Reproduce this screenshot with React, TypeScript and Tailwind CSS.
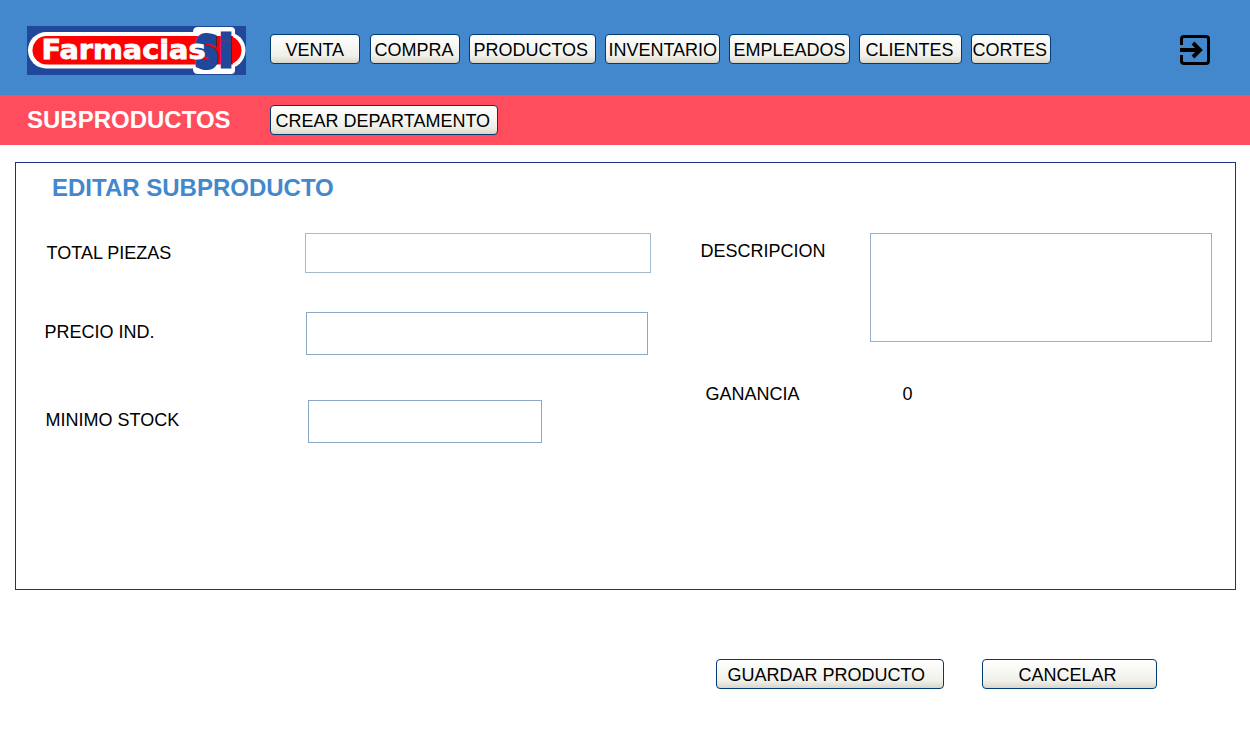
import type { ReactNode } from "react";

function Button({ className = "", children }: { className?: string; children: ReactNode }) {
  return (
    <button
      type="button"
      className={`h-[30px] shrink-0 whitespace-nowrap rounded-[4px] border border-[#003c74] bg-linear-to-b from-white from-0% via-[#f0f0ea] via-75% to-[#d9d5c9] to-100% text-left text-[18px] leading-[28px] text-black ${className}`}
    >
      <span className="block pt-px pl-[0.4px] leading-[28px]">{children}</span>
    </button>
  );
}

function Logo() {
  return (
    <svg className="block h-[49px] w-[219px] shrink-0 overflow-visible" viewBox="0 0 219 49">
      <rect width="219" height="49" fill="#21479b" />
      <rect x="1" y="6" width="217.5" height="36.5" rx="18.25" fill="#fff" />
      <rect x="5.5" y="10" width="209" height="28.5" rx="14.25" fill="#f00" />
      <path d="M171 1h33q4 0 4 4v3l-3 4v25l3 4v3q0 4-4 4h-33q-5 0-5-5v-4h3V10h-3V6q0-5 5-5z" fill="#fff" />
      <path d="M168 10h38v28.5h-38z" fill="#f00" />
      <text x="168" y="40.5" textLength="23.5" lengthAdjust="spacingAndGlyphs" fill="#21479b" stroke="#21479b" strokeWidth="5" fontFamily="DejaVu Sans, sans-serif" fontWeight="700" fontSize="43">
        S
      </text>
      <text x="191.5" y="41" textLength="15" lengthAdjust="spacingAndGlyphs" fill="#21479b" stroke="#21479b" strokeWidth="3" fontFamily="DejaVu Sans, sans-serif" fontWeight="700" fontSize="45">
        i
      </text>
      <text x="14.5" y="33" textLength="164" lengthAdjust="spacingAndGlyphs" fill="#fff" stroke="#fff" strokeWidth="0.8" fontFamily="DejaVu Sans, sans-serif" fontWeight="700" fontSize="26">
        Farmacias
      </text>
    </svg>
  );
}

function ExitIcon() {
  return (
    <svg className="block h-[30px] w-[30px]" viewBox="0 0 30 30" fill="none" stroke="#000" strokeWidth="3">
      <path d="M1.5 10V4Q1.5 1.5 4 1.5H26Q28.5 1.5 28.5 4V26Q28.5 28.5 26 28.5H4Q1.5 28.5 1.5 26V20" />
      <path d="M0 15H20M13 8l7 7-7 7" strokeWidth="4" />
    </svg>
  );
}

export default function App() {
  return (
    <div className="flex h-[750px] w-[1250px] flex-col overflow-hidden bg-white font-['Liberation_Sans',Arial,sans-serif] text-[18px] text-black">
      <header className="flex h-[95px] shrink-0 items-start bg-[#4388cc] pl-[27px]">
        <div className="pt-[26px]"><Logo /></div>
        <nav className="flex pt-[34px] pl-[24px]">
          <Button className="w-[90px] pl-[14px]">VENTA</Button>
          <Button className="ml-[10px] w-[90px] pl-[3px]">COMPRA</Button>
          <Button className="ml-[9px] w-[127px] pl-[3px]">PRODUCTOS</Button>
          <Button className="ml-[9px] w-[115px] pl-[2px]">INVENTARIO</Button>
          <Button className="ml-[9px] w-[121px] pl-[3px]">EMPLEADOS</Button>
          <Button className="ml-[9px] w-[103px] pl-[5px]">CLIENTES</Button>
          <Button className="ml-[9px] w-[80px] pl-0">CORTES</Button>
        </nav>
        <button type="button" aria-label="Salir" className="mt-[35px] ml-auto mr-[40px]"><ExitIcon /></button>
      </header>
      <div className="flex h-[50px] shrink-0 items-start bg-[#ff4d5d] pl-[27px]">
        <h1 className="w-[243px] pt-[11px] text-[24px] leading-[28px] font-bold text-white">SUBPRODUCTOS</h1>
        <Button className="mt-[10px] w-[228px] pl-[4px]">CREAR DEPARTAMENTO</Button>
      </div>
      <main className="mx-[15px] mt-[17px] h-[428px] w-[1221px] shrink-0 border border-[#1b3281]">
        <h2 className="h-[70px] pt-[11px] pl-[36px] text-[24px] leading-[28px] font-bold text-[#4388cc]">EDITAR SUBPRODUCTO</h2>
        <div className="flex items-start">
          <div className="w-[684px]">
            <label className="flex h-[79px] items-start pl-[30px]">
              <span className="w-[259px] pt-[10px] pl-[0.6px] leading-[20px]">TOTAL PIEZAS</span>
              <input className="block h-[40px] w-[346px] border border-[#a3b9cc]" />
            </label>
            <label className="flex h-[88px] items-start pl-[28px]">
              <span className="w-[262px] pt-[10px] pl-[0.6px] leading-[20px]">PRECIO IND.</span>
              <input className="block h-[43px] w-[342px] border border-[#8ba9c4]" />
            </label>
            <label className="flex items-start pl-[29px]">
              <span className="w-[263px] pt-[10px] pl-[0.6px] leading-[20px]">MINIMO STOCK</span>
              <input className="block h-[43px] w-[234px] border border-[#8ba9c4]" />
            </label>
          </div>
          <div>
            <label className="flex h-[151px] items-start">
              <span className="w-[170px] pt-[8px] pl-[0.6px] leading-[20px]">DESCRIPCION</span>
              <textarea className="block h-[109px] w-[342px] resize-none border border-[#98b0c9]" />
            </label>
            <div className="flex pl-[5.6px] leading-[20px]">
              <span className="w-[197px]">GANANCIA</span>
              <span>0</span>
            </div>
          </div>
        </div>
      </main>
      <footer className="flex pt-[69px] pl-[716px]">
        <Button className="w-[228px] pl-[10px]">GUARDAR PRODUCTO</Button>
        <Button className="ml-[38px] w-[175px] pl-[35px]">CANCELAR</Button>
      </footer>
    </div>
  );
}
